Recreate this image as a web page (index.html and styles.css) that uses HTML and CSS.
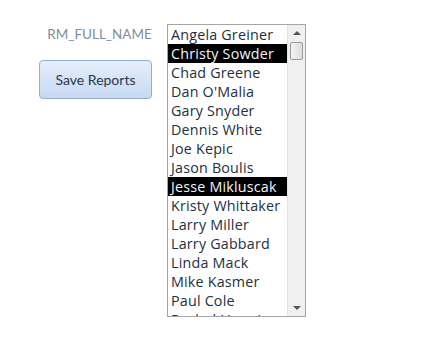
FILE: index.html
```html
<!DOCTYPE html>
<html lang="en">
<head>
    <meta charset="UTF-8">
    <title>Reports</title>
    <link rel="stylesheet" href="styles.css">
</head>
<body>
    <div class="form">
        <div class="side">
            <div class="field-label">RM_FULL_NAME</div>
            <button class="save-btn">Save Reports</button>
        </div>
        <div class="listbox">
            <ul class="names">
                <li>Angela Greiner</li>
                <li class="selected">Christy Sowder</li>
                <li>Chad Greene</li>
                <li>Dan O'Malia</li>
                <li>Gary Snyder</li>
                <li>Dennis White</li>
                <li>Joe Kepic</li>
                <li>Jason Boulis</li>
                <li class="selected">Jesse Mikluscak</li>
                <li>Kristy Whittaker</li>
                <li>Larry Miller</li>
                <li>Larry Gabbard</li>
                <li>Linda Mack</li>
                <li>Mike Kasmer</li>
                <li>Paul Cole</li>
                <li>Rachel Hoopingarner</li>
            </ul>
            <div class="scrollbar">
                <span class="arrow up"></span>
                <span class="thumb"></span>
                <span class="track"></span>
                <span class="arrow down"></span>
            </div>
        </div>
    </div>
</body>
</html>
```

FILE: styles.css
```css
body {
    margin: 0;
    background: #fff;
    font-family: Lato, "Open Sans", sans-serif;
}

.form {
    display: flex;
    align-items: flex-start;
    padding: 24px 0 0 39px;
}

.side {
    width: 113px;
    display: flex;
    flex-direction: column;
    align-items: stretch;
}

.field-label {
    color: #7d8ea0;
    font-size: 13.5px;
    text-align: center;
    padding: 2px 0 0 8px;
    height: 36px;
    box-sizing: border-box;
}

.save-btn {
    height: 39px;
    border: 1px solid #93acd0;
    border-radius: 4px;
    background: linear-gradient(#e6eefb, #c6d9f3);
    color: #2a3848;
    font-family: Lato, "Open Sans", sans-serif;
    font-size: 14px;
    padding: 0;
}

.listbox {
    margin-left: 15px;
    width: 139px;
    height: 293px;
    border: 1px solid #a5a5a5;
    box-sizing: border-box;
    display: flex;
    overflow: hidden;
}

.names {
    list-style: none;
    margin: 0;
    padding: 0;
    flex: 1;
    overflow: hidden;
}

.names li {
    height: 19px;
    line-height: 19px;
    padding-left: 3px;
    font-family: "Open Sans", sans-serif;
    font-size: 14.3px;
    letter-spacing: 0.2px;
    color: #23303f;
    white-space: nowrap;
}

.names li.selected {
    background: #000;
    color: #eef4ff;
}

.scrollbar {
    width: 17px;
    background: #f0f0f0;
    border-left: 1px solid #e4e4e4;
    display: flex;
    flex-direction: column;
    align-items: center;
}

.arrow {
    width: 0;
    height: 0;
    border-left: 4px solid transparent;
    border-right: 4px solid transparent;
}

.arrow.up {
    margin: 6px 0 7px;
    border-bottom: 4px solid #555;
}

.arrow.down {
    margin: 7px 0 6px;
    border-top: 4px solid #555;
}

.thumb {
    width: 13px;
    height: 18px;
    box-sizing: border-box;
    border: 1px solid #9a9a9a;
    border-radius: 2px;
    background: linear-gradient(90deg, #f4f4f4, #dcdcdc);
}

.track {
    flex: 1;
}
```
